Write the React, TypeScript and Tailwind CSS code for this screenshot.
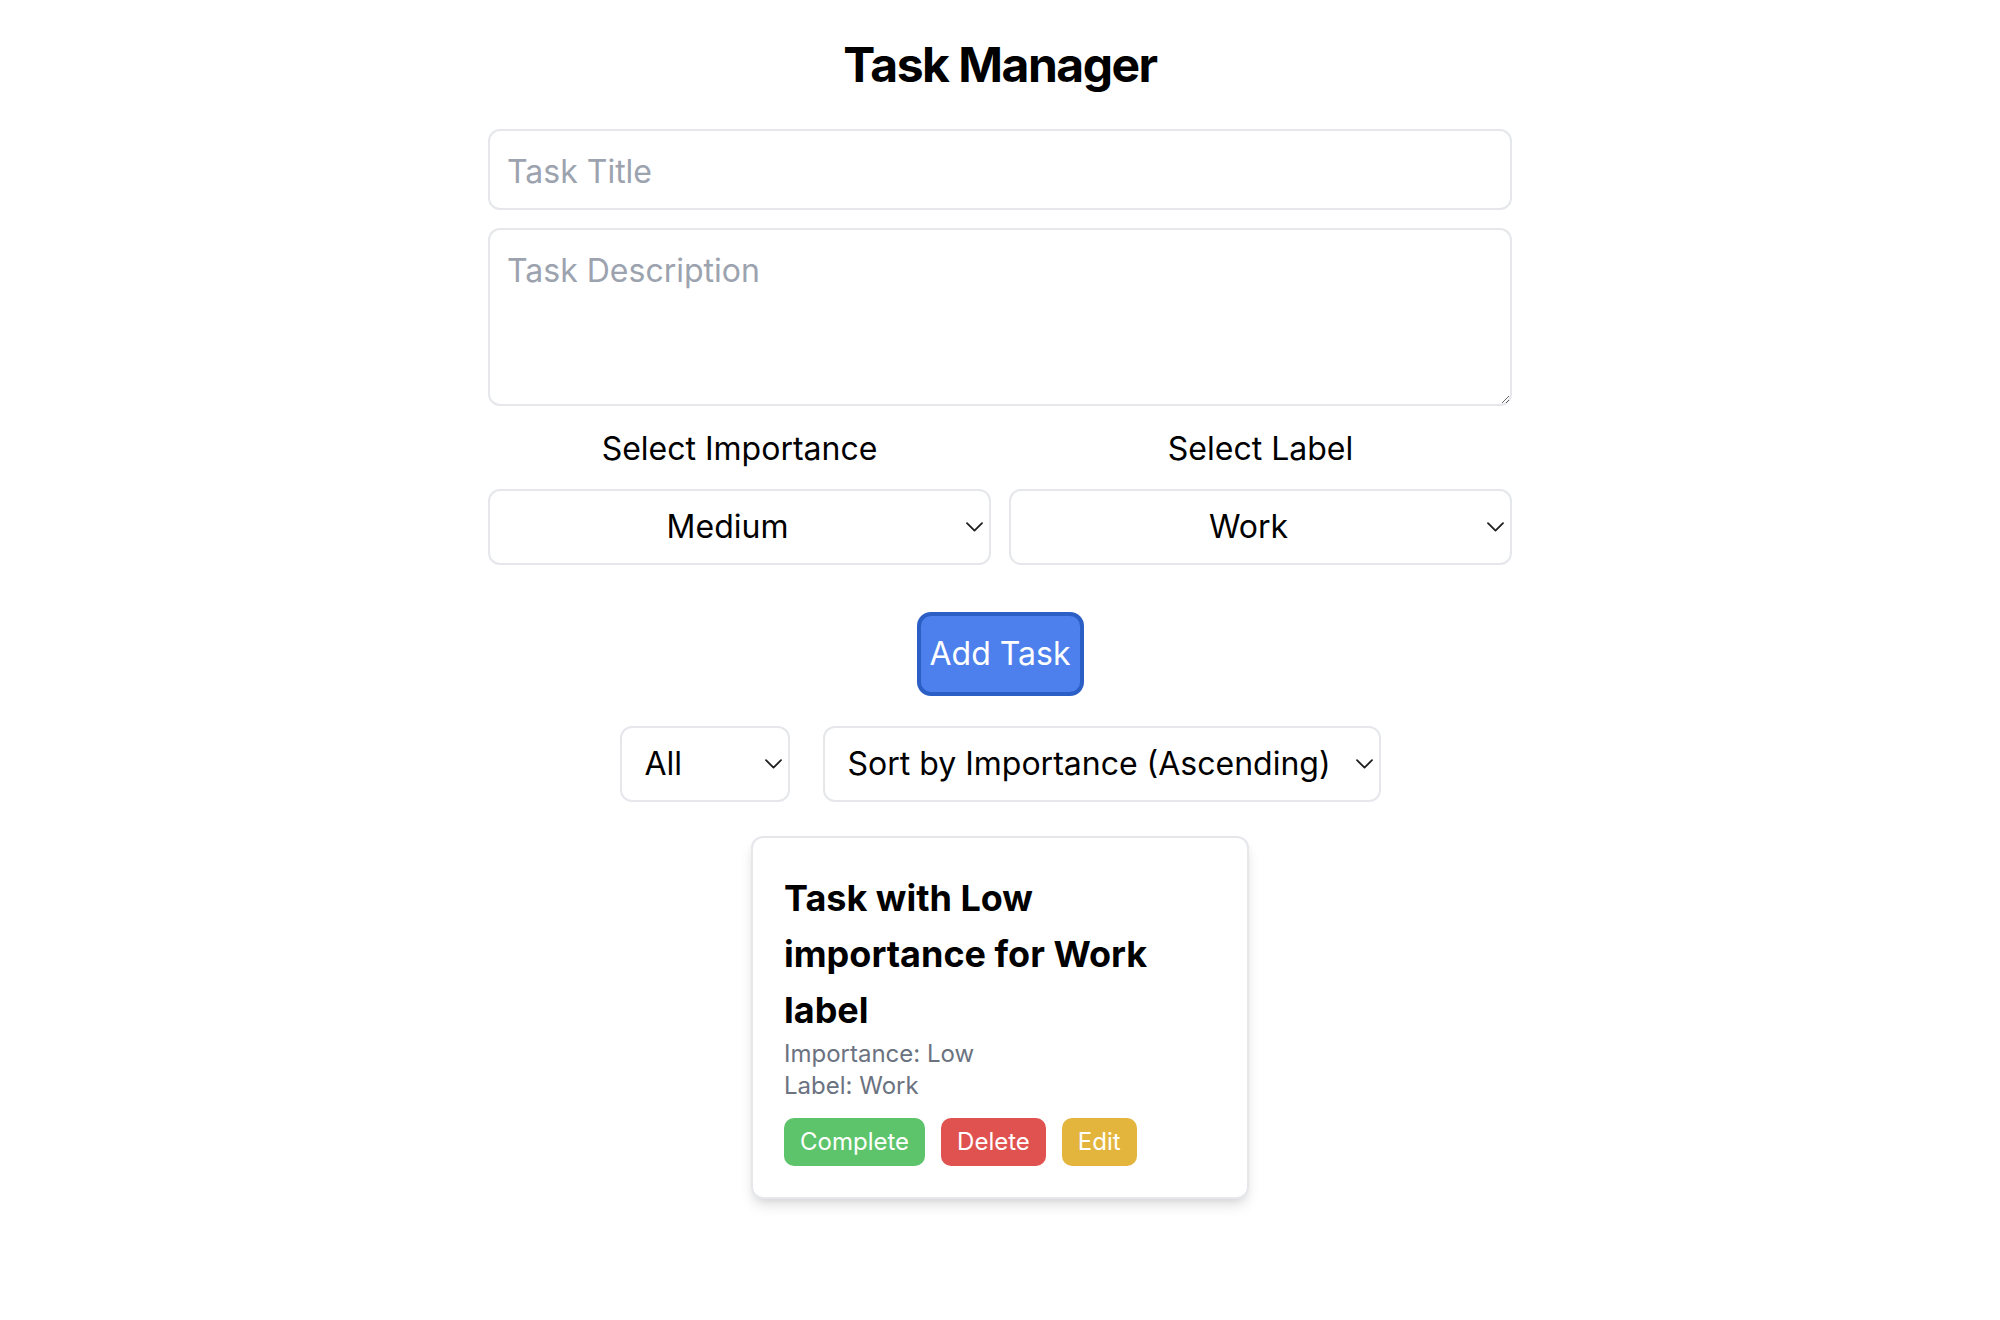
import { useState } from "react";

function Chevron() {
    return (
        <svg
            width="17"
            height="10"
            viewBox="0 0 17 10"
            className="pointer-events-none absolute right-[8px] top-1/2 -translate-y-1/2"
            fill="none"
        >
            <polyline points="1,1.2 8.5,8.6 16,1.2" stroke="#1f1f1f" strokeWidth="1.8" strokeLinecap="round" strokeLinejoin="round" />
        </svg>
    );
}

interface SelectBoxProps {
    value: string;
    options: string[];
    onChange: (v: string) => void;
    className: string;
}

function SelectBox({ value, options, onChange, className }: SelectBoxProps) {
    return (
        <div className="relative">
            <select
                value={value}
                onChange={(e) => onChange(e.target.value)}
                className={`appearance-none bg-white h-[76px] border-2 border-[#e5e7eb] rounded-[12px] text-[32px] leading-[48px] text-black outline-none ${className}`}
            >
                {options.map((o) => (
                    <option key={o}>{o}</option>
                ))}
            </select>
            <Chevron />
        </div>
    );
}

export default function App() {
    const [importance, setImportance] = useState("Medium");
    const [label, setLabel] = useState("Work");
    const [filter, setFilter] = useState("All");
    const [sort, setSort] = useState("Sort by Importance (Ascending)");

    return (
        <div className="min-h-screen bg-white text-black font-['Inter','Noto_Sans',sans-serif]">
            <div className="mx-auto w-[1024px] pt-[33px] flex flex-col items-center">
                <h1 className="text-[48px] leading-[64px] font-bold tracking-[-1.5px]">Task Manager</h1>

                {/* Form */}
                <input
                    type="text"
                    placeholder="Task Title"
                    className="mt-[32px] w-full h-[81px] border-2 border-[#e5e7eb] rounded-[12px] px-[17px] pt-[4px] text-[32px] leading-[48px] outline-none placeholder:text-[#9ca3af]"
                />
                <textarea
                    placeholder="Task Description"
                    className="mt-[18px] w-full h-[178px] border-2 border-[#e5e7eb] rounded-[12px] px-[17px] py-[17px] text-[32px] leading-[48px] outline-none placeholder:text-[#9ca3af]"
                />

                <div className="mt-[19px] w-full grid grid-cols-2 gap-[18px]">
                    <div className="flex flex-col">
                        <label className="text-center text-[32px] leading-[48px]">Select Importance</label>
                        <div className="mt-[16px]">
                            <SelectBox
                                value={importance}
                                onChange={setImportance}
                                options={["Low", "Medium", "High"]}
                                className="w-full text-center pl-[24px] pr-[48px]"
                            />
                        </div>
                    </div>
                    <div className="flex flex-col">
                        <label className="text-center text-[32px] leading-[48px]">Select Label</label>
                        <div className="mt-[16px]">
                            <SelectBox
                                value={label}
                                onChange={setLabel}
                                options={["Work", "Personal", "Other"]}
                                className="w-full text-center pl-[24px] pr-[48px]"
                            />
                        </div>
                    </div>
                </div>

                <button className="mt-[47px] w-[167px] h-[84px] rounded-[14px] border-[4px] border-[#2c5fc6] bg-[#4d80ec] text-white text-[32px] leading-[48px]">
                    Add Task
                </button>

                {/* Filters */}
                <div className="mt-[30px] flex gap-[33px]">
                    <SelectBox
                        value={filter}
                        onChange={setFilter}
                        options={["All", "Work", "Personal"]}
                        className="w-[170px] pl-[23px] pr-[40px]"
                    />
                    <SelectBox
                        value={sort}
                        onChange={setSort}
                        options={["Sort by Importance (Ascending)", "Sort by Importance (Descending)"]}
                        className="w-[558px] pl-[23px] pr-[40px]"
                    />
                </div>

                {/* Task list */}
                <div className="mt-[34px] w-[498px] rounded-[12px] border-2 border-[#e5e7eb] bg-white pl-[31px] pr-[29px] pt-[32px] pb-[31px] shadow-[0_8px_14px_-2px_rgba(0,0,0,0.12),0_4px_8px_-4px_rgba(0,0,0,0.1)]">
                    <h3 className="text-[36px] leading-[56px] font-bold">Task with Low importance for Work label</h3>
                    <p className="text-[24px] leading-[32px] text-[#6b7280]">Importance: Low</p>
                    <p className="text-[24px] leading-[32px] text-[#6b7280]">Label: Work</p>
                    <div className="mt-[16px] flex gap-[16px]">
                        <button className="h-[48px] px-[16px] rounded-[10px] bg-[#5ec46b] text-white text-[24px] leading-[32px]">
                            Complete
                        </button>
                        <button className="h-[48px] px-[16px] rounded-[10px] bg-[#e0524f] text-white text-[24px] leading-[32px]">
                            Delete
                        </button>
                        <button className="h-[48px] px-[16px] rounded-[10px] bg-[#e3b53d] text-white text-[24px] leading-[32px]">
                            Edit
                        </button>
                    </div>
                </div>
            </div>
        </div>
    );
}
